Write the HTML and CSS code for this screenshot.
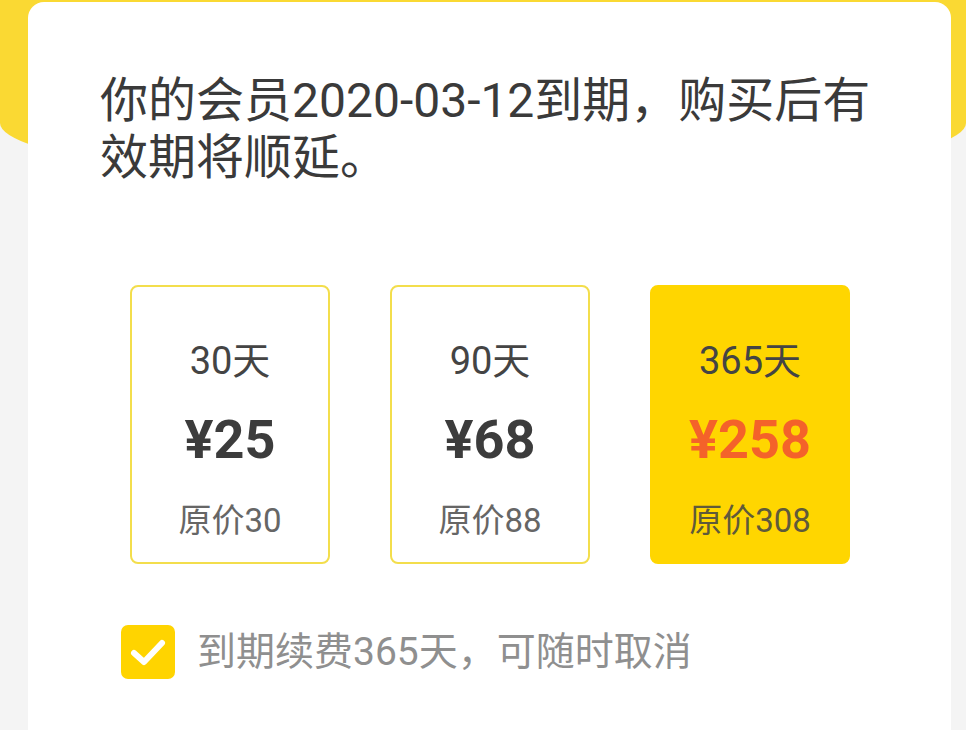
FILE: index.html
```html
<!DOCTYPE html>
<html lang="zh-CN">
<head>
<meta charset="utf-8">
<title>会员续费</title>
<link rel="stylesheet" href="styles.css">
</head>
<body>
<div class="page">
  <div class="header"></div>
  <div class="card">
    <p class="notice">你的会员2020-03-12到期，购买后有效期将顺延。</p>
    <div class="plans">
      <div class="plan">
        <div class="days">30天</div>
        <div class="price">¥25</div>
        <div class="orig">原价30</div>
      </div>
      <div class="plan">
        <div class="days">90天</div>
        <div class="price">¥68</div>
        <div class="orig">原价88</div>
      </div>
      <div class="plan selected">
        <div class="days">365天</div>
        <div class="price">¥258</div>
        <div class="orig">原价308</div>
      </div>
    </div>
    <div class="renew">
      <span class="check">
        <svg width="54" height="54" viewBox="0 0 54 54"><polyline points="13,28 23,37 41,18" fill="none" stroke="#fff" stroke-width="6" stroke-linecap="round" stroke-linejoin="round"/></svg>
      </span>
      <span class="renew-text">到期续费365天，可随时取消</span>
    </div>
  </div>
</div>
</body>
</html>
```
FILE: styles.css
```css
html, body {
  margin: 0;
  padding: 0;
}
body {
  background: #f4f4f4;
  font-family: Roboto, "Noto Sans CJK SC", sans-serif;
  color: #3b3b3b;
}
.page {
  width: 966px;
  height: 730px;
  overflow: hidden;
}
.header {
  height: 185px;
  background: #fad933;
  border-radius: 0 0 50% 50% / 0 0 62px 62px;
}
.card {
  margin: -183px 15px 0 28px;
  background: #ffffff;
  border-radius: 16px;
  min-height: 760px;
  padding: 70px 0 0 0;
  box-sizing: border-box;
}
.notice {
  margin: 0 0 0 72px;
  width: 800px;
  font-size: 48px;
  line-height: 57px;
  color: #3a3a3a;
}
.plans {
  display: flex;
  gap: 60px;
  margin: 99px 0 0 102px;
}
.plan {
  width: 200px;
  height: 279px;
  box-sizing: border-box;
  border: 2px solid #f3de4c;
  border-radius: 8px;
  padding-top: 49px;
  text-align: center;
  display: flex;
  flex-direction: column;
}
.plan.selected {
  background: #ffd600;
  border-color: #ffd600;
}
.days {
  font-size: 38px;
  line-height: 50px;
  color: #444;
}
.price {
  margin-top: 24px;
  font-size: 54px;
  line-height: 60px;
  font-weight: 700;
  color: #3c3c3c;
}
.selected .price {
  color: #f4622a;
}
.orig {
  margin-top: 29px;
  font-size: 33px;
  line-height: 44px;
  color: #666;
}
.selected .orig {
  color: #5f5a3a;
}
.renew {
  display: flex;
  align-items: center;
  margin: 61px 0 0 93px;
  gap: 22px;
}
.check {
  width: 54px;
  height: 54px;
  border-radius: 7px;
  background: #ffd400;
  display: flex;
}
.renew-text {
  font-size: 39px;
  line-height: 54px;
  color: #8f8f8f;
}
```
